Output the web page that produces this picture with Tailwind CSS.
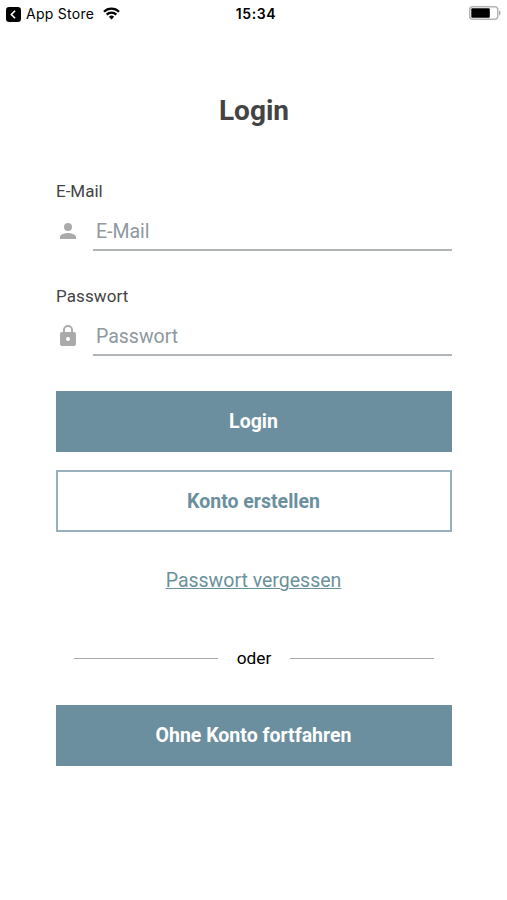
<!DOCTYPE html>
<html lang="de"><head><meta charset="utf-8"><title>Login</title>
<script src="https://cdn.jsdelivr.net/npm/@tailwindcss/browser@4"></script></head>
<body class="bg-white">
<div class="h-[900px] w-[507px] overflow-hidden bg-white font-['Roboto',sans-serif] text-[#444]">
<header class="relative flex h-7 items-center justify-between pl-[6px] pr-[6px] font-['Inter',sans-serif] text-black">
<div class="flex items-center">
<svg class="size-[15px]" viewBox="0 0 14 14"><rect width="14" height="14" rx="3"/><path d="M8.500 3.500 5 7l3.500 3.500" fill="none" stroke="#fff" stroke-width="1.500"/></svg>
<span class="ml-[5px] text-[14px] leading-7 tracking-[0.28px]">App Store</span>
<svg class="mb-[2px] ml-[9px] h-[13px] w-[17px]" viewBox="0 0 17 13" fill="none" stroke="#000" stroke-width="2.3"><path d="M1 4.800a10.600 10.600 0 0 1 15 0M3.700 7.600a6.800 6.800 0 0 1 9.600 0"/><path d="M8.500 12.500 5.900 9.800a3.700 3.700 0 0 1 5.200 0z" fill="#000" stroke="none"/></svg>
</div>
<span class="absolute inset-x-0 pl-[5px] text-center text-[14px] font-semibold leading-7 tracking-[0.6px]">15:34</span>
<svg class="mb-[2px] h-[14px] w-[32px]" viewBox="0 0 32 14"><rect x=".75" y=".75" width="28" height="12.500" rx="3" fill="none" stroke="#b5b5b5" stroke-width="1.500"/><rect x="2.300" y="2.300" width="18.500" height="9.500" rx="1"/><path d="M30 4.500c2 .5 2 4.500 0 5z" fill="#aaa"/></svg>
</header>
<main class="pl-14 pr-[55px]">
<h1 class="mt-[62px] h-[42px] text-center text-[28px] font-bold leading-[42px]">Login</h1>
<label class="mt-[47px] block h-6 text-[17px] leading-6">E-Mail</label>
<div class="mt-[9px] flex h-[39px]"><svg class="mt-[7px] size-6 fill-[#aaa]" viewBox="0 0 24 24"><path d="M12 12a4 4 0 1 0 0-8 4 4 0 0 0 0 8zm0 2c-2.670 0-8 1.340-8 4v2h16v-2c0-2.660-5.330-4-8-4z"/></svg><div class="ml-[13px] flex-1 border-b-2 border-[#b1b5b7] pl-[3px] text-[19.500px] leading-[40px] text-[#8e989f]">E-Mail</div></div>
<label class="mt-[33px] block h-6 text-[17px] leading-6 tracking-[0.1px]">Passwort</label>
<div class="mt-[9px] flex h-[39px]"><svg class="mt-[7px] size-6 fill-[#aaa]" viewBox="0 0 24 24"><path d="M18 8h-1V6A5 5 0 0 0 7 6v2H6a2 2 0 0 0-2 2v10c0 1.100.9 2 2 2h12a2 2 0 0 0 2-2V10a2 2 0 0 0-2-2zm-6 9a2 2 0 1 1 0-4 2 2 0 0 1 0 4zm3.100-9H8.900V6a3.100 3.100 0 0 1 6.200 0z"/></svg><div class="ml-[13px] flex-1 border-b-2 border-[#b1b5b7] pl-[3px] text-[19.500px] leading-[40px] text-[#8e989f]">Passwort</div></div>
<button class="mt-[35px] block h-[61px] w-full bg-[#6b8f9e] pt-px pr-px text-[19.500px] font-bold text-white">Login</button>
<button class="mt-[18px] block h-[62px] w-full border-2 border-[#98b0bd] pt-px pr-px text-[19.500px] font-bold text-[#6b8f9e]">Konto erstellen</button>
<div class="mt-[33px] pr-px text-center text-[19.500px] leading-8 text-[#6b919b]"><a class="underline decoration-1 underline-offset-1">Passwort vergessen</a></div>
<div class="mt-[45px] flex h-8 items-center justify-center gap-[18.500px] text-[17.300px] leading-8 text-black"><span class="h-px w-36 bg-[#aaa]"></span><span>oder</span><span class="h-px w-36 bg-[#aaa]"></span></div>
<button class="mt-[31px] block h-[61px] w-full bg-[#6b8f9e] pr-px text-[19.500px] font-bold text-white">Ohne Konto fortfahren</button>
</main></div></body></html>
